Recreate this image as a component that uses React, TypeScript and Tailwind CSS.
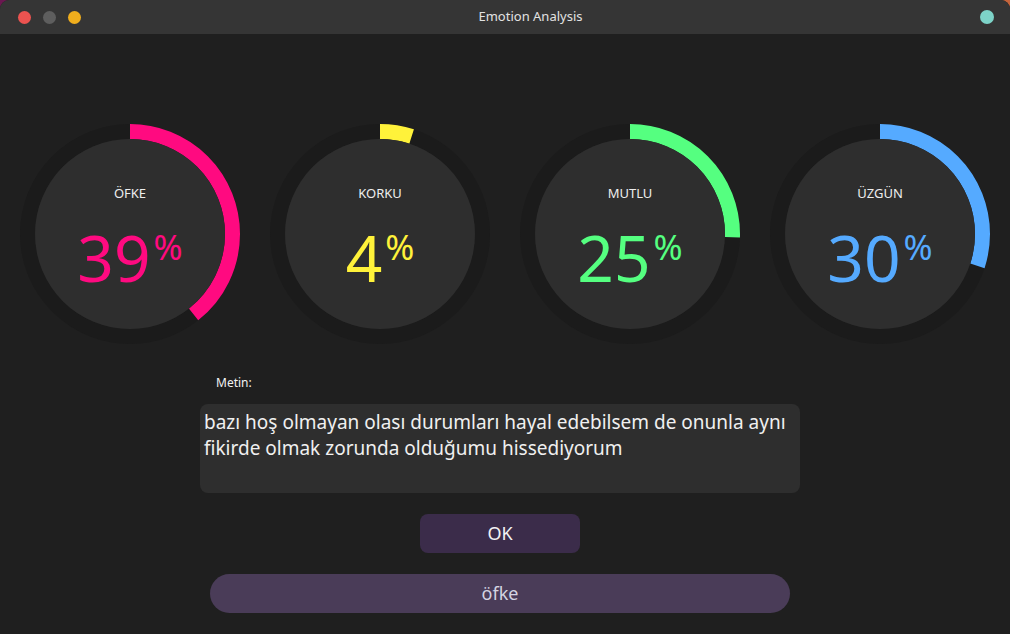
const EMOTIONS = [
  { label: "ÖFKE", value: 39.3, shown: 39, color: "#ff0a80", text: "text-[#ff0a80]" },
  { label: "KORKU", value: 5, shown: 4, color: "#fff23a", text: "text-[#fff23a]" },
  { label: "MUTLU", value: 25.5, shown: 25, color: "#55ff80", text: "text-[#55ff80]" },
  { label: "ÜZGÜN", value: 30, shown: 30, color: "#55aaff", text: "text-[#55aaff]" },
];

const R = 102.5;
const C = 2 * Math.PI * R;

function Gauge({ label, value, shown, color, text }: (typeof EMOTIONS)[number]) {
  const dash = (value / 100) * C;
  return (
    <div className="relative h-[220px] w-[220px]">
      <svg width="220" height="220" viewBox="0 0 220 220" className="absolute inset-0">
        <circle cx="110" cy="110" r={R} fill="none" stroke="#1b1b1b" strokeWidth="15" />
        <circle
          cx="110"
          cy="110"
          r={R}
          fill="none"
          stroke={color}
          strokeWidth="15"
          strokeDasharray={`${dash} ${C}`}
          transform="rotate(-90 110 110)"
        />
        <circle cx="110" cy="110" r="95" fill="#2e2e2e" />
      </svg>
      <div className="relative flex flex-col items-center pt-[60px]">
        <span className="text-[13px] leading-[18px] text-[#eeeeee]">{label}</span>
        <div className={`mt-[24px] flex items-start ${text}`}>
          <span className="text-[64px] leading-none">{shown}</span>
          <span className="ml-[3px] mt-[3px] text-[35px] leading-none">%</span>
        </div>
      </div>
    </div>
  );
}

export default function App() {
  return (
    <div
      className="h-[634px] w-[1010px] overflow-hidden bg-gradient-to-r from-[#6a1850] to-[#c4643c]"
      style={{ fontFamily: "'Noto Sans', 'Open Sans', sans-serif" }}
    >
      <div className="flex h-full flex-col overflow-hidden rounded-t-[9px] bg-[#1f1f1f]">
        <header className="relative flex h-[34px] shrink-0 items-center bg-[#353535] px-[18px]">
          <div className="flex items-center gap-[12px]">
            <span className="h-[13px] w-[13px] rounded-full bg-[#ec5350]" />
            <span className="h-[13px] w-[13px] rounded-full bg-[#5e5e5e]" />
            <span className="h-[13px] w-[13px] rounded-full bg-[#f0ae1d]" />
          </div>
          <span className="flex-1 text-center text-[13px] text-[#e2e2e2]">Emotion Analysis</span>
          <span className="mr-[-2px] h-[14px] w-[14px] rounded-full bg-[#7dd3c8]" />
        </header>

        <main className="flex flex-1 flex-col items-center">
          <div className="mt-[90px] flex gap-[30px]">
            {EMOTIONS.map((e) => (
              <Gauge key={e.label} {...e} />
            ))}
          </div>

          <div className="flex flex-col items-center pr-[10px]">
            <div className="mt-[31px] flex w-[600px] flex-col">
              <span className="pl-4 text-[12px] leading-[16px] text-[#f2f2f2]">Metin:</span>
              <div className="mt-[13px] h-[89px] rounded-lg bg-[#2e2e2e] px-[4px] pt-[5px] text-[19px] leading-[26px] text-[#f0f0f0]">
                bazı hoş olmayan olası durumları hayal edebilsem de onunla aynı fikirde olmak zorunda olduğumu hissediyorum
              </div>
            </div>

            <button
              type="button"
              className="mt-[21px] h-[39px] w-[160px] rounded-lg bg-[#3b2c4a] text-[18px] text-[#f2f2f2]"
            >
              OK
            </button>
            <button
              type="button"
              className="mt-[21px] h-[39px] w-[580px] rounded-full bg-[#4a3c58] text-[18px] text-[#d4d4e2]"
            >
              öfke
            </button>
          </div>
        </main>
      </div>
    </div>
  );
}
